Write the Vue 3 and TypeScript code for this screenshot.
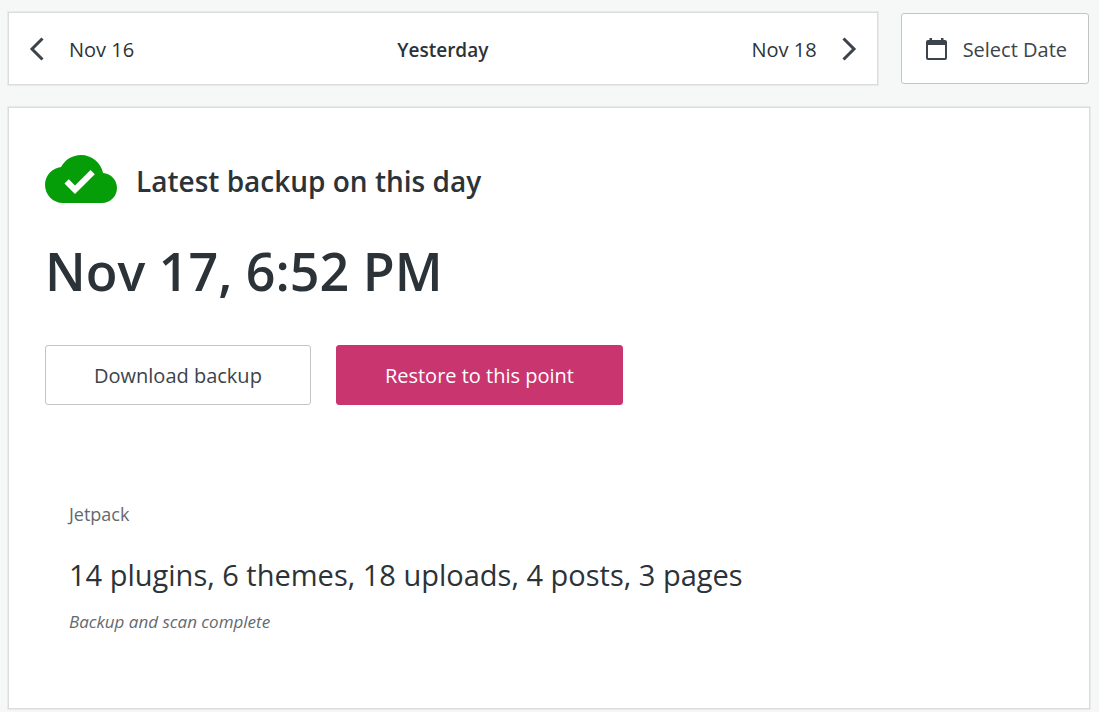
<script setup lang="ts">
interface Backup {
  title: string
  date: string
  source: string
  summary: string
  status: string
}

const previousDay: string = 'Nov 16'
const currentDay: string = 'Yesterday'
const nextDay: string = 'Nov 18'

const backup: Backup = {
  title: 'Latest backup on this day',
  date: 'Nov 17, 6:52 PM',
  source: 'Jetpack',
  summary: '14 plugins, 6 themes, 18 uploads, 4 posts, 3 pages',
  status: 'Backup and scan complete',
}
</script>

<template>
  <main class="page">
    <div class="toolbar">
      <nav class="picker" aria-label="Backup day">
        <button type="button" class="step">
          <svg class="chevron" viewBox="0 0 16 26" aria-hidden="true">
            <path d="M13.5 2.5 3 13l10.500 10.500" />
          </svg>
          <span class="label">{{ previousDay }}</span>
        </button>
        <strong class="current label">{{ currentDay }}</strong>
        <button type="button" class="step step-next">
          <span class="label">{{ nextDay }}</span>
          <svg class="chevron" viewBox="0 0 16 26" aria-hidden="true">
            <path d="M2.500 2.500 13 13 2.500 23.500" />
          </svg>
        </button>
      </nav>
      <button type="button" class="button select-date">
        <svg class="calendar" viewBox="0 0 21 22" aria-hidden="true">
          <path
            fill-rule="evenodd"
            d="M3.500 0h2.500v2h9V0h2.500v2H19q2 0 2 2v16q0 2-2 2H2q-2 0-2-2V4Q0 2 2 2h1.500ZM2 7v12.500q0 .5.500.5h16q.5 0 .5-.5V7Z"
          />
        </svg>
        <span class="label">Select Date</span>
      </button>
    </div>

    <section class="card">
      <header class="heading">
        <svg class="cloud" viewBox="0 4 24 16" aria-hidden="true">
          <path
            d="M19.350 10.040C18.670 6.590 15.640 4 12 4 9.110 4 6.600 5.640 5.350 8.040 2.340 8.360 0 10.910 0 14c0 3.310 2.690 6 6 6h13c2.760 0 5-2.240 5-5 0-2.640-2.050-4.780-4.650-4.960ZM10 17l-3.500-3.500 1.410-1.410L10 14.170l5.180-5.170 1.410 1.410L10 17Z"
          />
        </svg>
        <h2 class="title">{{ backup.title }}</h2>
      </header>
      <h1 class="date">{{ backup.date }}</h1>
      <div class="actions">
        <button type="button" class="button action">
          <span class="label">Download backup</span>
        </button>
        <button type="button" class="button action primary">
          <span class="label">Restore to this point</span>
        </button>
      </div>
      <div class="details">
        <p class="source">{{ backup.source }}</p>
        <p class="summary">{{ backup.summary }}</p>
        <p class="status">{{ backup.status }}</p>
      </div>
    </section>
  </main>
</template>

<style>
body {
  background: #f6f7f7;
}
</style>

<style scoped>
.page {
  box-sizing: border-box;
  padding: 12px 9px 3px 8px;
  font-family: 'Segoe UI', 'Open Sans', 'Noto Sans', sans-serif;
  font-size: 20px;
  line-height: 28px;
  color: #2c3338;
}

.toolbar {
  display: flex;
  align-items: center;
  gap: 23px;
  padding-right: 1px;
}

.picker,
.card {
  box-sizing: border-box;
  background: #fff;
  border: 1px solid #dcdcdc;
  box-shadow: 0 0 0 1px #e9eaea;
}

.picker {
  flex: 1;
  display: grid;
  grid-template-columns: 1fr auto 1fr;
  align-items: center;
  height: 73px;
  padding: 0 20px;
}

.step {
  display: flex;
  align-items: center;
  gap: 24px;
  padding: 0;
  border: 0;
  background: none;
  color: inherit;
  font: inherit;
  cursor: pointer;
}

.step-next {
  justify-self: end;
}

.label {
  padding-top: 2px;
}

.chevron {
  width: 16px;
  height: 26px;
  fill: none;
  stroke: #3c434a;
  stroke-width: 3;
}

.current {
  font-size: 19px;
  font-weight: 600;
}

.button {
  box-sizing: border-box;
  display: flex;
  align-items: center;
  justify-content: center;
  border: 1px solid #c3c4c7;
  border-radius: 3px;
  background: #fff;
  color: #3c434a;
  font: inherit;
  white-space: nowrap;
  cursor: pointer;
}

.select-date {
  height: 71px;
  gap: 16px;
  padding: 0 21px 0 24px;
}

.calendar {
  width: 21px;
  height: 22px;
  fill: #3c434a;
}

.card {
  margin-top: 22px;
  padding: 47px 36px 73px;
}

.heading {
  display: flex;
  align-items: center;
  gap: 19px;
}

.cloud {
  width: 72px;
  height: 48px;
  fill: #069e08;
}

.title,
.date,
.source,
.summary,
.status {
  margin: 0;
}

.title {
  padding-top: 4px;
  font-size: 28px;
  line-height: 40px;
  font-weight: 600;
}

.date {
  margin-top: 34px;
  font-size: 52px;
  line-height: 68px;
  font-weight: 600;
}

.actions {
  display: flex;
  flex-wrap: wrap;
  gap: 25px;
  margin-top: 40px;
}

.action {
  height: 60px;
  padding: 0 48px;
}

.primary {
  border-color: #c9356e;
  background: #c9356e;
  color: #fff;
}

.details {
  margin-top: 96px;
  padding-left: 24px;
}

.source,
.status {
  font-size: 17px;
  line-height: 26px;
  color: #646970;
}

.source {
  font-size: 18px;
}

.summary {
  margin-top: 28px;
  font-size: 29px;
  line-height: 40px;
}

.status {
  margin-top: 14px;
  font-style: italic;
}
</style>
